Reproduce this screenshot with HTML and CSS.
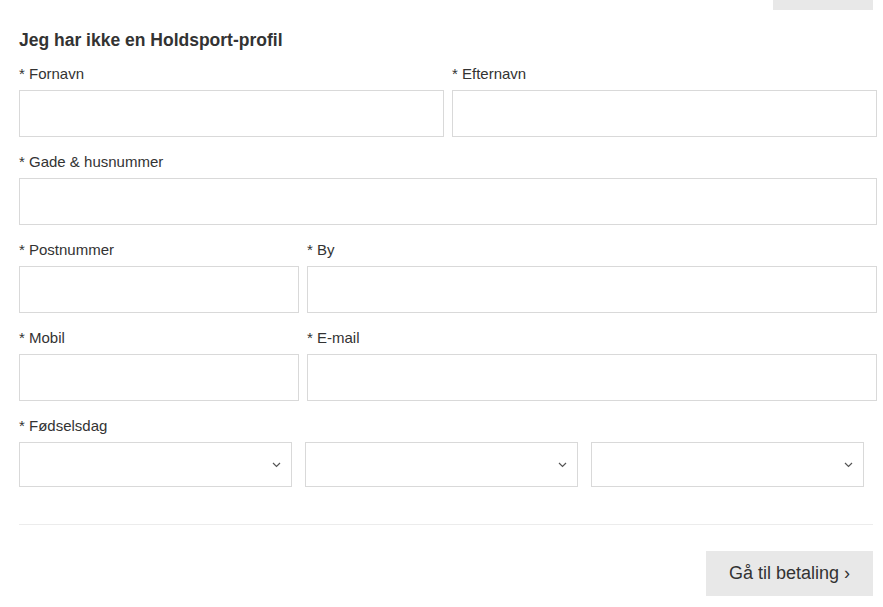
FILE: index.html
```html
<!DOCTYPE html>
<html lang="da">
  <head>
    <meta charset="UTF-8" />
    <meta name="viewport" content="width=device-width, initial-scale=1.0" />
    <title>Holdsport - Betaling</title>
    <link rel="stylesheet" href="styles.css">
  </head>

  <body>
    <div class="page">
      <div class="top-actions">
        <button class="btn-top" type="button"></button>
      </div>

      <h2 class="form-title">Jeg har ikke en Holdsport-profil</h2>

      <form class="signup">
        <div class="row">
          <div class="field half">
            <label>* Fornavn</label>
            <input type="text" />
          </div>
          <div class="field half">
            <label>* Efternavn</label>
            <input type="text" />
          </div>
        </div>

        <div class="row">
          <div class="field full">
            <label>* Gade &amp; husnummer</label>
            <input type="text" />
          </div>
        </div>

        <div class="row">
          <div class="field short">
            <label>* Postnummer</label>
            <input type="text" />
          </div>
          <div class="field grow">
            <label>* By</label>
            <input type="text" />
          </div>
        </div>

        <div class="row">
          <div class="field short">
            <label>* Mobil</label>
            <input type="tel" />
          </div>
          <div class="field grow">
            <label>* E-mail</label>
            <input type="email" />
          </div>
        </div>

        <div class="field">
          <label>* Fødselsdag</label>
          <div class="birthday">
            <div class="select-wrap">
              <select><option></option></select>
              <svg class="chevron" width="9" height="6" viewBox="0 0 9 6"><path d="M1 1l3.5 3.5L8 1" fill="none" stroke="#555" stroke-width="1.2"/></svg>
            </div>
            <div class="select-wrap">
              <select><option></option></select>
              <svg class="chevron" width="9" height="6" viewBox="0 0 9 6"><path d="M1 1l3.5 3.5L8 1" fill="none" stroke="#555" stroke-width="1.2"/></svg>
            </div>
            <div class="select-wrap">
              <select><option></option></select>
              <svg class="chevron" width="9" height="6" viewBox="0 0 9 6"><path d="M1 1l3.5 3.5L8 1" fill="none" stroke="#555" stroke-width="1.2"/></svg>
            </div>
          </div>
        </div>

        <hr class="divider" />

        <div class="actions">
          <button class="btn-pay" type="submit">Gå til betaling ›</button>
        </div>
      </form>
    </div>
  </body>
</html>
```

FILE: styles.css
```css
* {
  box-sizing: border-box;
  margin: 0;
  padding: 0;
}

body {
  font-family: "Liberation Sans", Arial, sans-serif;
  color: #333;
  background: #fff;
}

.page {
  width: 858px;
  margin-left: 19px;
}

.top-actions {
  display: flex;
  justify-content: flex-end;
  padding-right: 4px;
}

.btn-top {
  width: 100px;
  height: 10px;
  border: none;
  background-color: #e8e8e8;
}

.form-title {
  font-size: 17.5px;
  font-weight: bold;
  line-height: 20px;
  margin-top: 20px;
  color: #333;
}

.signup {
  margin-top: 14px;
}

.row {
  display: flex;
  gap: 8px;
}

.field {
  display: flex;
  flex-direction: column;
  margin-bottom: 15px;
}

.field label {
  font-size: 15px;
  line-height: 20px;
  margin-bottom: 6px;
  color: #333;
}

.field input {
  height: 47px;
  border: 1px solid #d9d9d9;
  background: #fff;
  font-family: inherit;
  font-size: 14px;
  padding: 0 10px;
  width: 100%;
}

.half,
.full,
.grow {
  flex: 1;
}

.short {
  width: 280px;
  flex: none;
}

.birthday {
  display: flex;
  gap: 13px;
}

.select-wrap {
  position: relative;
  width: 273px;
}

.select-wrap select {
  appearance: none;
  -webkit-appearance: none;
  width: 100%;
  height: 45px;
  border: 1px solid #d9d9d9;
  background: #fff;
  font-family: inherit;
  font-size: 14px;
  border-radius: 0;
}

.chevron {
  position: absolute;
  right: 11px;
  top: 20px;
  pointer-events: none;
}

.divider {
  border: none;
  border-top: 1px solid #ececec;
  margin: 37px 4px 26px 0;
}

.actions {
  display: flex;
  justify-content: flex-end;
  padding-right: 4px;
}

.btn-pay {
  background-color: #e8e8e8;
  border: none;
  height: 45px;
  width: 167px;
  font-family: inherit;
  font-size: 18px;
  color: #333;
  cursor: pointer;
}
```
